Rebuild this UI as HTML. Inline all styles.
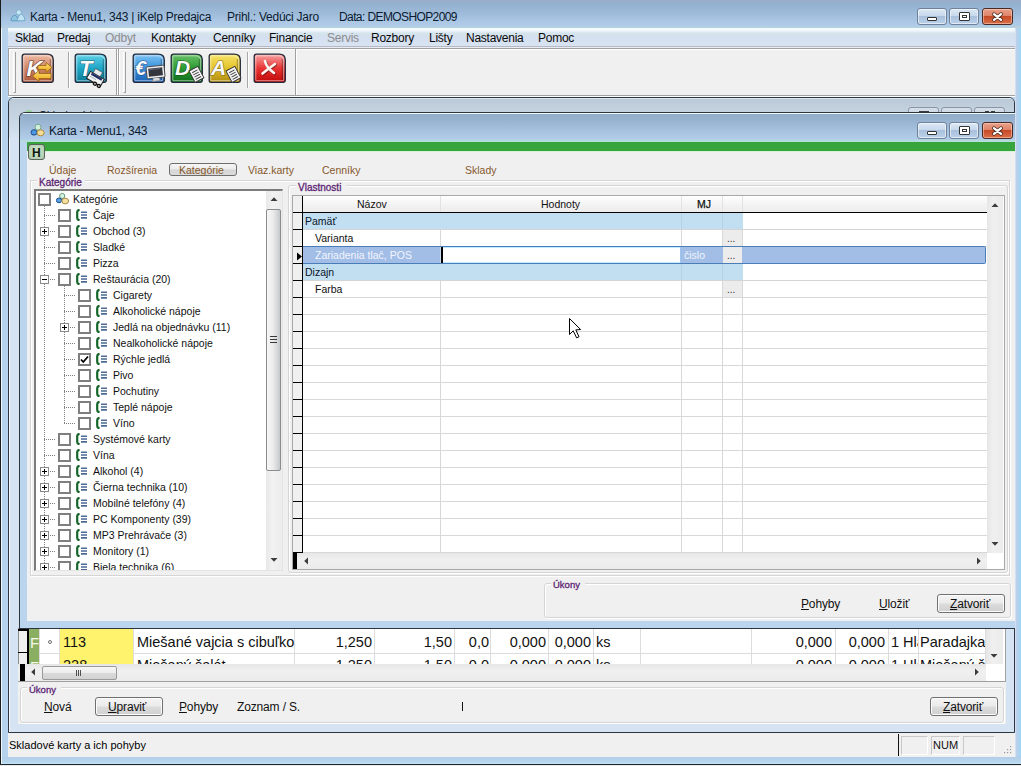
<!DOCTYPE html>
<html><head><meta charset="utf-8">
<style>
*{box-sizing:border-box}
html,body{margin:0;padding:0}
body{width:1021px;height:766px;position:relative;overflow:hidden;background:#b9d2ec;font-family:"Liberation Sans",sans-serif;color:#000}
.a{position:absolute}
.t{position:absolute;white-space:nowrap;line-height:1}
.wb{position:absolute;width:30px;height:17px;border:1px solid #6f819b;border-radius:3px;background:linear-gradient(#dce8f5 0%,#c8d9ec 45%,#a9c0dc 50%,#bcd1ea 100%);box-shadow:inset 0 0 0 1px rgba(255,255,255,.55)}
.wb.c{width:31px;border-color:#4a2a24;background:linear-gradient(#eaa08c 0%,#de8468 45%,#c74a26 50%,#d9704a 100%);box-shadow:inset 0 0 0 1px rgba(255,220,200,.5)}
.menu{position:absolute;top:32px;font-size:12px;letter-spacing:-0.25px;line-height:1;white-space:nowrap;color:#0a0a0a}
.menu.g{color:#8d8d8d}
.tbicon{position:absolute;width:32px;height:29px;border:1.5px solid #2b2f3c;border-radius:4px 8px 4px 4px}
.tbsep{position:absolute;width:1px;background:#a8a8a8;box-shadow:1px 0 0 #fff}
</style></head><body>

<!-- ===== OUTER FRAME ===== -->
<div class="a" style="left:0;top:0;width:1021px;height:28px;background:linear-gradient(#9aaecb 0px,#94b0cf 4px,#9cbad7 12px,#a8c5e3 20px,#b0cce8 26px,#b8d0dc 27px,#b8d0dc 28px)"></div>
<div class="a" style="left:2px;top:28px;width:6px;height:736px;background:#b6d2ec"></div>
<div class="a" style="left:1015px;top:28px;width:6px;height:736px;background:linear-gradient(90deg,#e8f0fa 0px,#bccfe8 1px,#b4d2ee 3px,#9cd6f6 6px)"></div>
<div class="a" style="left:0;top:757px;width:1021px;height:7px;background:linear-gradient(#b2cde8,#b8d6ee 5px,#c4e4f4 7px)"></div>
<div class="a" style="left:0;top:0;width:1px;height:766px;background:#1c1c1c"></div>
<div class="a" style="left:1px;top:28px;width:1px;height:736px;background:#f0f6fc"></div>
<div class="a" style="left:0;top:764px;width:1021px;height:1px;background:#1e2630"></div>
<div class="a" style="left:0;top:765px;width:1021px;height:1px;background:#e8e8e8"></div>

<!-- title icon -->
<svg class="a" style="left:10px;top:9px" width="16" height="13" viewBox="0 0 16 13"><path d="M1.2,11.8 Q0.6,9 3,6.8 Q5,5.6 6.4,7 L8.5,11.8 Z" fill="#8ec4e0" stroke="#5e98c0" stroke-width=".9" stroke-linejoin="round"/><path d="M6.6,11.8 L9.6,5.6 Q11.5,4.6 13,6.2 Q15.4,9 14.8,11.8 Z" fill="#c0e2f2" stroke="#6ea6c8" stroke-width=".9" stroke-linejoin="round"/><circle cx="8.8" cy="3.4" r="2.6" fill="#c8e8f4" stroke="#78acc8" stroke-width=".9"/></svg>
<div class="t" style="left:30px;top:11px;font-size:12px;letter-spacing:-0.25px;color:#0c1a30">Karta - Menu1, 343 | iKelp Predajca</div>
<div class="t" style="left:227px;top:11px;font-size:12px;letter-spacing:-0.25px;color:#0c1a30">Prihl.: Vedúci Jaro</div>
<div class="t" style="left:339px;top:11px;font-size:12px;letter-spacing:-0.6px;color:#0c1a30">Data: DEMOSHOP2009</div>

<div class="wb" style="left:917px;top:8px"><div class="a" style="left:9px;top:8px;width:10px;height:4px;border:1px solid #333;background:#fff;border-radius:1px"></div></div>
<div class="wb" style="left:949px;top:8px"><div class="a" style="left:9px;top:3px;width:11px;height:9px;border:1px solid #333;background:#fff;border-radius:1px"><div class="a" style="left:2px;top:2px;width:5px;height:3px;border:1px solid #333"></div></div></div>
<div class="wb c" style="left:982px;top:8px"><svg class="a" style="left:8px;top:2px" width="13" height="12" viewBox="0 0 13 12"><path d="M3,3.2 L10,8.8 M10,3.2 L3,8.8" stroke="#4a2a20" stroke-width="3.8" stroke-linecap="round"/><path d="M3,3.2 L10,8.8 M10,3.2 L3,8.8" stroke="#fff" stroke-width="2.3" stroke-linecap="round"/></svg></div>

<!-- ===== MENU BAR ===== -->
<div class="a" style="left:8px;top:28px;width:1007px;height:18px;background:linear-gradient(#f4ffff 0px,#eef4fb 3px,#d4e4ec 5px,#d4dff0 10px,#d8e4f2 18px)"></div>
<div class="a" style="left:8px;top:46px;width:1007px;height:1px;background:#b8b8c4"></div>
<div class="a" style="left:8px;top:47px;width:1007px;height:1px;background:#e8ecf4"></div>
<div class="a" style="left:8px;top:48px;width:1007px;height:1px;background:#a0a0a0"></div>
<div class="menu" style="left:15px">Sklad</div>
<div class="menu" style="left:57px">Predaj</div>
<div class="menu g" style="left:105px">Odbyt</div>
<div class="menu" style="left:151px">Kontakty</div>
<div class="menu" style="left:213px">Cenníky</div>
<div class="menu" style="left:269px">Financie</div>
<div class="menu g" style="left:327px">Servis</div>
<div class="menu" style="left:371px">Rozbory</div>
<div class="menu" style="left:429px">Lišty</div>
<div class="menu" style="left:466px">Nastavenia</div>
<div class="menu" style="left:538px">Pomoc</div>

<!-- ===== TOOLBAR ===== -->
<div class="a" style="left:8px;top:49px;width:1007px;height:48px;background:#f0f0f0;border-top:1px solid #fff"></div>
<!--TOOLBAR_ICONS-->
<div class="a" style="left:8px;top:48px;width:109px;height:48px;border:1px solid #a0a0a0;box-shadow:inset 1px 1px 0 #fff,1px 1px 0 #fff"></div>
<div class="a" style="left:118px;top:48px;width:178px;height:48px;border:1px solid #a0a0a0;box-shadow:inset 1px 1px 0 #fff,1px 1px 0 #fff"></div>
<div class="a" style="left:13px;top:52px;width:3px;height:41px;border-left:1px solid #fff;border-right:1px solid #a0a0a0;border-bottom:1px solid #a0a0a0"></div>
<div class="a" style="left:123px;top:52px;width:3px;height:41px;border-left:1px solid #fff;border-right:1px solid #a0a0a0;border-bottom:1px solid #a0a0a0"></div>
<div class="a" style="left:68px;top:52px;width:1px;height:36px;background:#a8a8a8;box-shadow:1px 0 0 #fff"></div>
<div class="a" style="left:247px;top:52px;width:1px;height:36px;background:#a8a8a8;box-shadow:1px 0 0 #fff"></div>
<svg class="a" style="left:21px;top:53px;overflow:visible" width="34" height="34" viewBox="0 0 34 34"><defs><linearGradient id="gk" x1="0" y1="0" x2="0" y2="1"><stop offset="0" stop-color="#f0bca6"/><stop offset=".5" stop-color="#cf8566"/><stop offset="1" stop-color="#a9553a"/></linearGradient></defs>
<path d="M3.5,1.2 H26 Q32.3,1.2 32.3,7 V27.5 Q32.3,29.3 30.5,29.3 H2.8 Q1.2,29.3 1.2,27.5 V3.5 Q1.2,1.2 3.5,1.2 Z" fill="url(#gk)" stroke="#22283a" stroke-width="1.3"/>
<path d="M3.8,2.8 H25.6 Q30.6,2.8 30.6,7.6 V27 Q30.6,27.7 30,27.7 H3.2 Q2.8,27.7 2.8,27 V3.8 Q2.8,2.8 3.8,2.8 Z" fill="none" stroke="#ffffff" stroke-opacity=".5" stroke-width="1"/>
<path d="M29.5,6 V27" stroke="#000" stroke-opacity=".25" stroke-width="1.5"/>
<text x="5.5" y="23" font-family="Liberation Sans" font-weight="bold" font-style="italic" font-size="22" fill="#fbfbfb" stroke="#5a2e1c" stroke-width="1.1" paint-order="stroke">K</text>
<defs><linearGradient id="ar" x1="0" y1="0" x2="0" y2="1"><stop offset="0" stop-color="#ffe070"/><stop offset="1" stop-color="#e8a418"/></linearGradient></defs>
<path d="M17,12.5 H25 V9.5 L31,14.5 L25,19.5 V16.5 H17 Z" fill="url(#ar)" stroke="#9a6210" stroke-width=".8"/>
<path d="M30,20.5 H18 V17.5 L11.5,23 L18,28.5 V25.5 H30 Z" fill="url(#ar)" stroke="#9a6210" stroke-width=".8"/></svg>
<svg class="a" style="left:74px;top:53px;overflow:visible" width="34" height="34" viewBox="0 0 34 34"><defs><linearGradient id="gt" x1="0" y1="0" x2="0" y2="1"><stop offset="0" stop-color="#62d2e8"/><stop offset=".5" stop-color="#1ea6c6"/><stop offset="1" stop-color="#0a7a96"/></linearGradient></defs>
<path d="M3.5,1.2 H26 Q32.3,1.2 32.3,7 V27.5 Q32.3,29.3 30.5,29.3 H2.8 Q1.2,29.3 1.2,27.5 V3.5 Q1.2,1.2 3.5,1.2 Z" fill="url(#gt)" stroke="#22283a" stroke-width="1.3"/>
<path d="M3.8,2.8 H25.6 Q30.6,2.8 30.6,7.6 V27 Q30.6,27.7 30,27.7 H3.2 Q2.8,27.7 2.8,27 V3.8 Q2.8,2.8 3.8,2.8 Z" fill="none" stroke="#ffffff" stroke-opacity=".5" stroke-width="1"/>
<path d="M29.5,6 V27" stroke="#000" stroke-opacity=".25" stroke-width="1.5"/><text x="5" y="23" font-family="Liberation Sans" font-weight="bold" font-style="italic" font-size="22" fill="#fafafa" stroke="#0a4a5a" stroke-opacity=".8" stroke-width="1.1" paint-order="stroke">T</text>
<g transform="translate(19,14) rotate(30)"><rect x="3" y="0" width="8" height="6" fill="#e4eaee" stroke="#444" stroke-width=".6"/>
<path d="M0,5 H16 V13 H0 Z" fill="#f2f2f2" stroke="#222" stroke-width="1"/>
<rect x="2" y="5.5" width="12" height="2.2" fill="#1c2c64"/>
<path d="M2,9.5 H9" stroke="#9ab" stroke-width=".8"/>
<circle cx="10" cy="13.5" r="2.2" fill="#111"/><circle cx="14.5" cy="13.5" r="2.2" fill="#111"/><circle cx="10" cy="13.5" r=".9" fill="#bbb"/><circle cx="14.5" cy="13.5" r=".9" fill="#bbb"/></g></svg>
<svg class="a" style="left:132px;top:53px;overflow:visible" width="34" height="34" viewBox="0 0 34 34"><defs><linearGradient id="ge" x1="0" y1="0" x2="0" y2="1"><stop offset="0" stop-color="#7cc4f4"/><stop offset=".5" stop-color="#3a90dc"/><stop offset="1" stop-color="#1c62b4"/></linearGradient></defs>
<path d="M3.5,1.2 H26 Q32.3,1.2 32.3,7 V27.5 Q32.3,29.3 30.5,29.3 H2.8 Q1.2,29.3 1.2,27.5 V3.5 Q1.2,1.2 3.5,1.2 Z" fill="url(#ge)" stroke="#22283a" stroke-width="1.3"/>
<path d="M3.8,2.8 H25.6 Q30.6,2.8 30.6,7.6 V27 Q30.6,27.7 30,27.7 H3.2 Q2.8,27.7 2.8,27 V3.8 Q2.8,2.8 3.8,2.8 Z" fill="none" stroke="#ffffff" stroke-opacity=".5" stroke-width="1"/>
<path d="M29.5,6 V27" stroke="#000" stroke-opacity=".25" stroke-width="1.5"/><text x="3" y="22" font-family="Liberation Sans" font-weight="bold" font-style="italic" font-size="20" fill="#fafafa" stroke="#0c3c7c" stroke-opacity=".8" stroke-width="1.1" paint-order="stroke">€</text>
<g transform="translate(14,14) rotate(-6)"><rect x="0" y="0" width="18" height="12" rx="1.2" fill="#eceef0" stroke="#444" stroke-width=".9"/>
<rect x="2" y="2" width="14" height="8" fill="#34363e"/><path d="M3,3 L14,3" stroke="#667" stroke-width="1"/><path d="M6,12 L5,15 H13 L12,12" fill="#d8dadc" stroke="#777" stroke-width=".6"/></g></svg>
<svg class="a" style="left:170px;top:53px;overflow:visible" width="34" height="34" viewBox="0 0 34 34"><defs><linearGradient id="gd" x1="0" y1="0" x2="0" y2="1"><stop offset="0" stop-color="#6cc26a"/><stop offset=".5" stop-color="#2b9a32"/><stop offset="1" stop-color="#0f6e1c"/></linearGradient></defs>
<path d="M3.5,1.2 H26 Q32.3,1.2 32.3,7 V27.5 Q32.3,29.3 30.5,29.3 H2.8 Q1.2,29.3 1.2,27.5 V3.5 Q1.2,1.2 3.5,1.2 Z" fill="url(#gd)" stroke="#22283a" stroke-width="1.3"/>
<path d="M3.8,2.8 H25.6 Q30.6,2.8 30.6,7.6 V27 Q30.6,27.7 30,27.7 H3.2 Q2.8,27.7 2.8,27 V3.8 Q2.8,2.8 3.8,2.8 Z" fill="none" stroke="#ffffff" stroke-opacity=".5" stroke-width="1"/>
<path d="M29.5,6 V27" stroke="#000" stroke-opacity=".25" stroke-width="1.5"/><text x="5" y="22" font-family="Liberation Sans" font-weight="bold" font-style="italic" font-size="21" fill="#fafafa" stroke="#0a3a10" stroke-opacity=".8" stroke-width="1.1" paint-order="stroke">D</text><g transform="translate(19,18) rotate(-28)"><rect x="0" y="0" width="10" height="13" fill="#f4f4f4" stroke="#333" stroke-width=".9"/>
<path d="M2,3 H8 M2,5.5 H8 M2,8 H8 M2,10.5 H8" stroke="#444" stroke-width="1"/></g></svg>
<svg class="a" style="left:208px;top:53px;overflow:visible" width="34" height="34" viewBox="0 0 34 34"><defs><linearGradient id="ga" x1="0" y1="0" x2="0" y2="1"><stop offset="0" stop-color="#f8e46a"/><stop offset=".5" stop-color="#e2c22a"/><stop offset="1" stop-color="#b08a10"/></linearGradient></defs>
<path d="M3.5,1.2 H26 Q32.3,1.2 32.3,7 V27.5 Q32.3,29.3 30.5,29.3 H2.8 Q1.2,29.3 1.2,27.5 V3.5 Q1.2,1.2 3.5,1.2 Z" fill="url(#ga)" stroke="#22283a" stroke-width="1.3"/>
<path d="M3.8,2.8 H25.6 Q30.6,2.8 30.6,7.6 V27 Q30.6,27.7 30,27.7 H3.2 Q2.8,27.7 2.8,27 V3.8 Q2.8,2.8 3.8,2.8 Z" fill="none" stroke="#ffffff" stroke-opacity=".5" stroke-width="1"/>
<path d="M29.5,6 V27" stroke="#000" stroke-opacity=".25" stroke-width="1.5"/><text x="3" y="22" font-family="Liberation Sans" font-weight="bold" font-style="italic" font-size="21" fill="#fafafa" stroke="#6a5008" stroke-opacity=".8" stroke-width="1.1" paint-order="stroke">A</text><g transform="translate(18,18) rotate(-28)"><rect x="0" y="0" width="10" height="13" fill="#f4f4f4" stroke="#333" stroke-width=".9"/>
<path d="M2,3 H8 M2,5.5 H8 M2,8 H8 M2,10.5 H8" stroke="#444" stroke-width="1"/></g></svg>
<svg class="a" style="left:253px;top:53px;overflow:visible" width="34" height="34" viewBox="0 0 34 34"><defs><linearGradient id="gx" x1="0" y1="0" x2="0" y2="1"><stop offset="0" stop-color="#f8a4a4"/><stop offset=".5" stop-color="#e83434"/><stop offset="1" stop-color="#c00808"/></linearGradient></defs>
<path d="M3.5,1.2 H26 Q32.3,1.2 32.3,7 V27.5 Q32.3,29.3 30.5,29.3 H2.8 Q1.2,29.3 1.2,27.5 V3.5 Q1.2,1.2 3.5,1.2 Z" fill="url(#gx)" stroke="#22283a" stroke-width="1.3"/>
<path d="M3.8,2.8 H25.6 Q30.6,2.8 30.6,7.6 V27 Q30.6,27.7 30,27.7 H3.2 Q2.8,27.7 2.8,27 V3.8 Q2.8,2.8 3.8,2.8 Z" fill="none" stroke="#ffffff" stroke-opacity=".5" stroke-width="1"/>
<path d="M29.5,6 V27" stroke="#000" stroke-opacity=".25" stroke-width="1.5"/>
<path d="M12,8 Q13,14 21,20 M22,11 Q15,16 9.5,20.5" stroke="#000" stroke-opacity=".35" stroke-width="2.8" stroke-linecap="round" fill="none" transform="translate(.8,.8)"/>
<path d="M12,8 Q13,14 21,20 M22,11 Q15,16 9.5,20.5" stroke="#fbf4f0" stroke-width="2.6" stroke-linecap="round" fill="none"/></svg>

<!-- ===== CHILD 1 (Skladove karty) ===== -->
<div class="a" style="left:8px;top:95px;width:1007px;height:1px;background:#a0a0a0"></div>
<div class="a" style="left:8px;top:96px;width:1007px;height:1px;background:#fff"></div>
<div class="a" style="left:8px;top:97px;width:1007px;height:636px;background:#d6e3f2;border:1px solid #2e3640;box-shadow:inset 1px 0 0 #f4f8fc;border-radius:6px 6px 0 0;overflow:hidden"><div class="a" style="left:0;top:0;width:1005px;height:40px;background:linear-gradient(#dce6f0 0px,#dce6f0 1px,#bccad8 1px,#c2d0de 10px,#cad8e6 25px,#d6e3f2 40px)"></div></div>
<div class="a" style="left:18px;top:628px;width:988px;height:96px;background:#f0f0f0"></div>
<!--CHILD1_CONTENT-->
<div class="a" style="left:18px;top:628px;width:988px;height:54px;background:#fff;border-right:1px solid #a0a0a0;border-bottom:1px solid #a0a0a0;overflow:hidden">
<div class="a" style="left:0px;top:0px;width:10px;height:40px;background:#f0f0f0"></div>
<div class="a" style="left:0px;top:0px;width:1px;height:40px;background:#8c8c8c"></div>
<div class="a" style="left:9px;top:0px;width:2px;height:40px;background:#000"></div>
<div class="a" style="left:0px;top:1px;width:11px;height:2px;background:#000"></div>
<div class="a" style="left:0px;top:24px;width:11px;height:1px;background:#000"></div>
<div class="a" style="left:11px;top:1px;width:11px;height:24px;background:#8aae62"></div>
<div class="t" style="left:12px;top:7px;font-size:15px;color:#f4f8e8">F</div>
<div class="a" style="left:42px;top:1px;width:74px;height:24px;background:#fff36e"></div>
<div class="a" style="left:30px;top:12px;width:4px;height:4px;border:1px solid #707070;border-radius:50%"></div>
<div class="a" style="left:11px;top:25px;width:957px;height:1px;background:#dcdcdc"></div>
<div class="a" style="left:21px;top:1px;width:1px;height:24px;background:#dcdcdc"></div>
<div class="a" style="left:41px;top:1px;width:1px;height:24px;background:#dcdcdc"></div>
<div class="a" style="left:115px;top:1px;width:1px;height:24px;background:#dcdcdc"></div>
<div class="a" style="left:276px;top:1px;width:1px;height:24px;background:#dcdcdc"></div>
<div class="a" style="left:356px;top:1px;width:1px;height:24px;background:#dcdcdc"></div>
<div class="a" style="left:436px;top:1px;width:1px;height:24px;background:#dcdcdc"></div>
<div class="a" style="left:472px;top:1px;width:1px;height:24px;background:#dcdcdc"></div>
<div class="a" style="left:530px;top:1px;width:1px;height:24px;background:#dcdcdc"></div>
<div class="a" style="left:575px;top:1px;width:1px;height:24px;background:#dcdcdc"></div>
<div class="a" style="left:622px;top:1px;width:1px;height:24px;background:#dcdcdc"></div>
<div class="a" style="left:733px;top:1px;width:1px;height:24px;background:#dcdcdc"></div>
<div class="a" style="left:817px;top:1px;width:1px;height:24px;background:#dcdcdc"></div>
<div class="a" style="left:870px;top:1px;width:1px;height:24px;background:#dcdcdc"></div>
<div class="a" style="left:900px;top:1px;width:1px;height:24px;background:#dcdcdc"></div>
<div class="a" style="left:967px;top:1px;width:1px;height:24px;background:#dcdcdc"></div>
<div class="t" style="left:45px;top:7px;font-size:14.5px;color:#111">113</div>
<div class="t" style="left:119px;top:7px;font-size:14.5px;color:#111">Miešané vajcia s cibuľko</div>
<div class="t" style="right:633px;top:7px;font-size:14.5px;color:#111">1,250</div>
<div class="t" style="right:553px;top:7px;font-size:14.5px;color:#111">1,50</div>
<div class="t" style="right:516px;top:7px;font-size:14.5px;color:#111">0,0</div>
<div class="t" style="right:459px;top:7px;font-size:14.5px;color:#111">0,000</div>
<div class="t" style="right:414px;top:7px;font-size:14.5px;color:#111">0,000</div>
<div class="t" style="left:578px;top:7px;font-size:14.5px;color:#111">ks</div>
<div class="t" style="right:173px;top:7px;font-size:14.5px;color:#111">0,000</div>
<div class="t" style="right:120px;top:7px;font-size:14.5px;color:#111">0,000</div>
<div class="t" style="left:873px;top:7px;width:27px;overflow:hidden;font-size:14.5px;color:#111">1 Hla</div>
<div class="t" style="left:902px;top:7px;width:65px;overflow:hidden;font-size:14.5px;color:#111">Paradajka</div>
<div class="a" style="left:11px;top:25px;width:11px;height:24px;background:#8aae62"></div>
<div class="t" style="left:12px;top:31px;font-size:15px;color:#f4f8e8">F</div>
<div class="a" style="left:42px;top:25px;width:74px;height:24px;background:#fff36e"></div>
<div class="a" style="left:30px;top:36px;width:4px;height:4px;border:1px solid #707070;border-radius:50%"></div>
<div class="a" style="left:11px;top:49px;width:957px;height:1px;background:#dcdcdc"></div>
<div class="a" style="left:21px;top:25px;width:1px;height:24px;background:#dcdcdc"></div>
<div class="a" style="left:41px;top:25px;width:1px;height:24px;background:#dcdcdc"></div>
<div class="a" style="left:115px;top:25px;width:1px;height:24px;background:#dcdcdc"></div>
<div class="a" style="left:276px;top:25px;width:1px;height:24px;background:#dcdcdc"></div>
<div class="a" style="left:356px;top:25px;width:1px;height:24px;background:#dcdcdc"></div>
<div class="a" style="left:436px;top:25px;width:1px;height:24px;background:#dcdcdc"></div>
<div class="a" style="left:472px;top:25px;width:1px;height:24px;background:#dcdcdc"></div>
<div class="a" style="left:530px;top:25px;width:1px;height:24px;background:#dcdcdc"></div>
<div class="a" style="left:575px;top:25px;width:1px;height:24px;background:#dcdcdc"></div>
<div class="a" style="left:622px;top:25px;width:1px;height:24px;background:#dcdcdc"></div>
<div class="a" style="left:733px;top:25px;width:1px;height:24px;background:#dcdcdc"></div>
<div class="a" style="left:817px;top:25px;width:1px;height:24px;background:#dcdcdc"></div>
<div class="a" style="left:870px;top:25px;width:1px;height:24px;background:#dcdcdc"></div>
<div class="a" style="left:900px;top:25px;width:1px;height:24px;background:#dcdcdc"></div>
<div class="a" style="left:967px;top:25px;width:1px;height:24px;background:#dcdcdc"></div>
<div class="t" style="left:45px;top:30px;font-size:14.5px;color:#111">228</div>
<div class="t" style="left:119px;top:30px;font-size:14.5px;color:#111">Miešaný šalát</div>
<div class="t" style="right:633px;top:30px;font-size:14.5px;color:#111">1,250</div>
<div class="t" style="right:553px;top:30px;font-size:14.5px;color:#111">1,50</div>
<div class="t" style="right:516px;top:30px;font-size:14.5px;color:#111">0,0</div>
<div class="t" style="right:459px;top:30px;font-size:14.5px;color:#111">0,000</div>
<div class="t" style="right:414px;top:30px;font-size:14.5px;color:#111">0,000</div>
<div class="t" style="left:578px;top:30px;font-size:14.5px;color:#111">ks</div>
<div class="t" style="right:173px;top:30px;font-size:14.5px;color:#111">0,000</div>
<div class="t" style="right:120px;top:30px;font-size:14.5px;color:#111">0,000</div>
<div class="t" style="left:873px;top:30px;width:27px;overflow:hidden;font-size:14.5px;color:#111">1 Hla</div>
<div class="t" style="left:902px;top:30px;width:65px;overflow:hidden;font-size:14.5px;color:#111">Miešaný šalát</div>
<div class="a" style="left:968px;top:0px;width:17px;height:36px;background:linear-gradient(90deg,#e6e6e6,#f0f0f0 40%,#ebebeb)"></div>
<svg class="a" style="left:972px;top:25px" width="8" height="6" viewBox="0 0 8 6"><path d="M0.5,1 L4,4.8 L7.5,1 Z" fill="#3c3c3c"/></svg>
<div class="a" style="left:968px;top:36px;width:17px;height:17px;background:#fff"></div>
<div class="a" style="left:0px;top:36px;width:968px;height:17px;background:linear-gradient(#e6e6e6,#f0f0f0 40%,#ebebeb)"></div>
<div class="a" style="left:2px;top:36px;width:5px;height:17px;background:#000"></div>
<svg class="a" style="left:12px;top:40px" width="6" height="8" viewBox="0 0 6 8"><path d="M5,0.5 L1.2,4 L5,7.5 Z" fill="#3c3c3c"/></svg>
<svg class="a" style="left:956px;top:40px" width="6" height="8" viewBox="0 0 6 8"><path d="M1,0.5 L4.8,4 L1,7.5 Z" fill="#3c3c3c"/></svg>
<div class="a" style="left:24px;top:38px;width:75px;height:14px;border:1px solid #9a9a9a;border-radius:2px;background:linear-gradient(#f6f6f6,#ececec 50%,#dadada 51%,#d2d2d2)"></div>
<div class="a" style="left:58px;top:42px;width:5px;height:6px;background:repeating-linear-gradient(90deg,#505050 0 1px,transparent 1px 2px)"></div>
</div>
<div class="a" style="left:20px;top:687px;width:984px;height:36px;border:1px solid #d5d5d5;border-radius:3px;box-shadow:inset 1px 1px 0 #fff,1px 1px 0 #fff"></div>
<div class="a" style="left:27px;top:683px;width:34px;height:8px;background:#f0f0f0"></div>
<div class="t" style="left:29px;top:685px;font-size:9.5px;-webkit-text-stroke:.3px #5c2474;color:#5c2474">Úkony</div>
<div class="t" style="left:44px;top:701px;font-size:12px;letter-spacing:-0.15px;color:#111"><u>N</u>ová</div>
<div class="a" style="left:95px;top:697px;width:68px;height:19px;border:1px solid #707070;border-radius:3px;background:linear-gradient(#f4f4f4 0%,#ebebeb 48%,#dcdcdc 52%,#cfcfcf 100%);box-shadow:inset 0 0 0 1px #fcfcfc"></div>
<div class="t" style="left:108px;top:701px;font-size:12px;letter-spacing:-0.15px;color:#111"><u>U</u>praviť</div>
<div class="t" style="left:179px;top:701px;font-size:12px;letter-spacing:-0.15px;color:#111"><u>P</u>ohyby</div>
<div class="t" style="left:237px;top:701px;font-size:12px;letter-spacing:-0.15px;color:#111">Zoznam / S.</div>
<div class="a" style="left:462px;top:702px;width:1px;height:9px;background:#111"></div>
<div class="a" style="left:930px;top:697px;width:68px;height:19px;border:1px solid #707070;border-radius:3px;background:linear-gradient(#f4f4f4 0%,#ebebeb 48%,#dcdcdc 52%,#cfcfcf 100%);box-shadow:inset 0 0 0 1px #fcfcfc"></div>
<div class="t" style="left:943px;top:701px;font-size:12px;letter-spacing:-0.15px;color:#111"><u>Z</u>atvoriť</div>

<!-- ===== STATUS BAR ===== -->
<div class="a" style="left:8px;top:733px;width:1007px;height:24px;background:#f0f0f0"></div>
<div class="t" style="left:9px;top:740px;font-size:11px">Skladové karty a ich pohyby</div>
<!--STATUS_PANELS-->
<div class="a" style="left:898px;top:734px;width:1px;height:22px;background:#111"></div>
<div class="a" style="left:901px;top:736px;width:27px;height:19px;border:1px solid #c8c8c8;border-right-color:#fff;border-bottom-color:#fff"></div>
<div class="a" style="left:931px;top:736px;width:29px;height:19px;border:1px solid #c8c8c8;border-right-color:#fff;border-bottom-color:#fff"></div>
<div class="a" style="left:963px;top:736px;width:32px;height:19px;border:1px solid #c8c8c8;border-right-color:#fff;border-bottom-color:#fff"></div>
<div class="t" style="left:933px;top:740px;font-size:11px;color:#111">NUM</div>
<svg class="a" style="left:1003px;top:745px" width="10" height="10" viewBox="0 0 10 10"><g fill="#9a9a9a"><rect x="7" y="1" width="1.2" height="1.2"/><rect x="4" y="4" width="1.2" height="1.2"/><rect x="7" y="4" width="1.2" height="1.2"/><rect x="1" y="7" width="1.2" height="1.2"/><rect x="4" y="7" width="1.2" height="1.2"/><rect x="7" y="7" width="1.2" height="1.2"/></g></svg>

<!-- ===== CHILD 2 (Karta) ===== -->
<div class="a" style="left:19px;top:112px;width:996px;height:517px;background:#bcd5ee;border:1px solid #2e3640;border-right:none;border-radius:6px 0 0 0;overflow:hidden"><div class="a" style="left:0;top:0;width:996px;height:29px;background:linear-gradient(#eefafe 0px,#eefafe 1px,#92acc8 1px,#98b4d0 8px,#a6c2de 18px,#b2cde9 26px,#b4dcdc 28px,#b8e0d8 29px)"></div></div>
<div class="a" style="left:8px;top:97px;width:1007px;height:15px;overflow:hidden">
<div class="t" style="left:31px;top:13px;font-size:12px;letter-spacing:-0.25px;color:#1a2430">Skladové karty</div><div class="a" style="left:17px;top:13px;width:8px;height:6px;border-radius:50%;background:#9ad09a"></div>
<div class="a" style="left:900px;top:10px;width:31px;height:17px;border:1px solid #8a96a6;border-radius:3px;background:linear-gradient(#d4dee8,#c4d0dc)"><div class="a" style="left:10px;top:3px;width:10px;height:3px;background:#3a3a3a"></div></div>
<div class="a" style="left:933px;top:10px;width:31px;height:17px;border:1px solid #8a96a6;border-radius:3px;background:linear-gradient(#d4dee8,#c4d0dc)"></div>
<div class="a" style="left:966px;top:10px;width:31px;height:17px;border:1px solid #8a96a6;border-radius:3px;background:linear-gradient(#d4dee8,#c4d0dc)"><div class="a" style="left:10px;top:3px;width:4px;height:3px;background:#3a3a3a"></div><div class="a" style="left:16px;top:3px;width:4px;height:3px;background:#3a3a3a"></div></div>
</div>
<div class="wb" style="left:917px;top:122px"><div class="a" style="left:9px;top:8px;width:10px;height:4px;border:1px solid #333;background:#fff;border-radius:1px"></div></div>
<div class="wb" style="left:949px;top:122px"><div class="a" style="left:9px;top:3px;width:11px;height:9px;border:1px solid #333;background:#fff;border-radius:1px"><div class="a" style="left:2px;top:2px;width:5px;height:3px;border:1px solid #333"></div></div></div>
<div class="wb c" style="left:982px;top:122px"><svg class="a" style="left:8px;top:2px" width="13" height="12" viewBox="0 0 13 12"><path d="M3,3.2 L10,8.8 M10,3.2 L3,8.8" stroke="#4a2a20" stroke-width="3.8" stroke-linecap="round"/><path d="M3,3.2 L10,8.8 M10,3.2 L3,8.8" stroke="#fff" stroke-width="2.3" stroke-linecap="round"/></svg></div>
<svg class="a" style="left:30px;top:123px" width="15" height="14" viewBox="0 0 15 14"><circle cx="8" cy="4.2" r="3" fill="#d0f0dc" stroke="#78a890" stroke-width="1"/><ellipse cx="4" cy="9.4" rx="3" ry="2.7" fill="#4c98e0" stroke="#1c4c8c" stroke-width="1"/><ellipse cx="10.6" cy="9.8" rx="3.6" ry="3" fill="#f4dc98" stroke="#b08c40" stroke-width="1"/></svg>
<div class="t" style="left:49px;top:125px;font-size:12px;letter-spacing:-0.25px;color:#0c1a30">Karta - Menu1, 343</div>
<div class="a" style="left:27px;top:142px;width:988px;height:479px;background:#f0f0f0"></div>
<div class="a" style="left:27px;top:142px;width:988px;height:9px;background:#37a43c"></div>
<!--CHILD2_CONTENT-->
<div class="a" style="left:28px;top:144px;width:17px;height:16px;border:1.5px solid #56625a;border-radius:3px;background:radial-gradient(ellipse at 50% 45%,#d2e6d0 0%,#b6d2b2 70%,#a2c09e 100%)"></div>
<div class="t" style="left:32px;top:147px;font-size:12px;font-weight:bold;color:#101810">H</div>
<div class="a" style="left:45px;top:151px;width:970px;height:1px;background:#d8f4d4"></div>
<div class="t" style="left:49px;top:165px;font-size:10.5px;color:#86582c">Údaje</div>
<div class="t" style="left:107px;top:165px;font-size:10.5px;color:#86582c">Rozšírenia</div>
<div class="t" style="left:248px;top:165px;font-size:10.5px;color:#86582c">Viaz.karty</div>
<div class="t" style="left:322px;top:165px;font-size:10.5px;color:#86582c">Cenníky</div>
<div class="t" style="left:465px;top:165px;font-size:10.5px;color:#86582c">Sklady</div>
<div class="a" style="left:169px;top:163px;width:68px;height:13px;border:1px solid #6e6e6e;border-radius:3px;background:linear-gradient(#f6f6f6 0%,#ececec 45%,#d6d6d6 55%,#dcdcdc 100%)"></div>
<div class="t" style="left:179px;top:165px;font-size:10.5px;color:#86582c">Kategórie</div>
<div class="a" style="left:30px;top:180px;width:980px;height:396px;border:1px solid #d5d5d5;box-shadow:inset 1px 1px 0 #fff,1px 1px 0 #fff"></div>
<div class="a" style="left:37px;top:177px;width:48px;height:9px;background:#f0f0f0"></div>
<div class="t" style="left:39px;top:178px;font-size:10px;-webkit-text-stroke:.3px #5c2474;color:#5c2474">Kategórie</div>
<div class="a" style="left:34px;top:189px;width:249px;height:382px;background:#fff;border-top:2px solid #7c7c7c;border-left:2px solid #7c7c7c;border-right:1px solid #e4e4e4;border-bottom:1px solid #e4e4e4;overflow:hidden">
<div class="a" style="left:8px;top:15px;width:1px;height:369px;background:repeating-linear-gradient(#808080 0 1px,transparent 1px 2px)"></div>
<div class="a" style="left:28px;top:95px;width:1px;height:137px;background:repeating-linear-gradient(#808080 0 1px,transparent 1px 2px)"></div>
<div class="a" style="left:2px;top:2px;width:13px;height:13px;border:2px solid #7f7f7f;background:#fff"></div>
<svg class="a" style="left:20px;top:1px" width="14" height="13" viewBox="0 0 14 13"><circle cx="6.2" cy="4" r="2.6" fill="#d4f4e4" stroke="#6a9a7a" stroke-width="1"/><ellipse cx="3" cy="8.4" rx="2.6" ry="2.4" fill="#5aa0e4" stroke="#1c4c8c" stroke-width="1"/><ellipse cx="9.2" cy="9" rx="3.4" ry="2.8" fill="#f4e0a0" stroke="#a88840" stroke-width="1"/></svg>
<div class="t" style="left:37px;top:3px;font-size:10.5px;color:#111">Kategórie</div>
<div class="a" style="left:8px;top:24px;width:11px;height:1px;background:repeating-linear-gradient(90deg,#808080 0 1px,transparent 1px 2px)"></div>
<div class="a" style="left:22px;top:18px;width:13px;height:13px;border:2px solid #7f7f7f;background:#fff"></div>
<svg class="a" style="left:40px;top:18px" width="12" height="12" viewBox="0 0 12 12"><path d="M3.6,0.8 Q1.2,1 1.2,3.2 V8.8 Q1.2,11 3.6,11.2" stroke="#16662a" stroke-width="2.2" fill="none"/><path d="M5,3.2 H11 M5,6 H11 M5,8.9 H11" stroke="#4c6a94" stroke-width="1.6"/></svg>
<div class="t" style="left:57px;top:19px;font-size:10.5px;color:#111">Čaje</div>
<div class="a" style="left:8px;top:40px;width:11px;height:1px;background:repeating-linear-gradient(90deg,#808080 0 1px,transparent 1px 2px)"></div>
<div class="a" style="left:4px;top:36px;width:9px;height:9px;border:1px solid #8a8a8a;background:#fff"></div>
<div class="a" style="left:6px;top:40px;width:5px;height:1px;background:#000"></div>
<div class="a" style="left:8px;top:38px;width:1px;height:5px;background:#000"></div>
<div class="a" style="left:22px;top:34px;width:13px;height:13px;border:2px solid #7f7f7f;background:#fff"></div>
<svg class="a" style="left:40px;top:34px" width="12" height="12" viewBox="0 0 12 12"><path d="M3.6,0.8 Q1.2,1 1.2,3.2 V8.8 Q1.2,11 3.6,11.2" stroke="#16662a" stroke-width="2.2" fill="none"/><path d="M5,3.2 H11 M5,6 H11 M5,8.9 H11" stroke="#4c6a94" stroke-width="1.6"/></svg>
<div class="t" style="left:57px;top:35px;font-size:10.5px;color:#111">Obchod (3)</div>
<div class="a" style="left:8px;top:56px;width:11px;height:1px;background:repeating-linear-gradient(90deg,#808080 0 1px,transparent 1px 2px)"></div>
<div class="a" style="left:22px;top:50px;width:13px;height:13px;border:2px solid #7f7f7f;background:#fff"></div>
<svg class="a" style="left:40px;top:50px" width="12" height="12" viewBox="0 0 12 12"><path d="M3.6,0.8 Q1.2,1 1.2,3.2 V8.8 Q1.2,11 3.6,11.2" stroke="#16662a" stroke-width="2.2" fill="none"/><path d="M5,3.2 H11 M5,6 H11 M5,8.9 H11" stroke="#4c6a94" stroke-width="1.6"/></svg>
<div class="t" style="left:57px;top:51px;font-size:10.5px;color:#111">Sladké</div>
<div class="a" style="left:8px;top:72px;width:11px;height:1px;background:repeating-linear-gradient(90deg,#808080 0 1px,transparent 1px 2px)"></div>
<div class="a" style="left:22px;top:66px;width:13px;height:13px;border:2px solid #7f7f7f;background:#fff"></div>
<svg class="a" style="left:40px;top:66px" width="12" height="12" viewBox="0 0 12 12"><path d="M3.6,0.8 Q1.2,1 1.2,3.2 V8.8 Q1.2,11 3.6,11.2" stroke="#16662a" stroke-width="2.2" fill="none"/><path d="M5,3.2 H11 M5,6 H11 M5,8.9 H11" stroke="#4c6a94" stroke-width="1.6"/></svg>
<div class="t" style="left:57px;top:67px;font-size:10.5px;color:#111">Pizza</div>
<div class="a" style="left:8px;top:88px;width:11px;height:1px;background:repeating-linear-gradient(90deg,#808080 0 1px,transparent 1px 2px)"></div>
<div class="a" style="left:4px;top:84px;width:9px;height:9px;border:1px solid #8a8a8a;background:#fff"></div>
<div class="a" style="left:6px;top:88px;width:5px;height:1px;background:#000"></div>
<div class="a" style="left:22px;top:82px;width:13px;height:13px;border:2px solid #7f7f7f;background:#fff"></div>
<svg class="a" style="left:40px;top:82px" width="12" height="12" viewBox="0 0 12 12"><path d="M3.6,0.8 Q1.2,1 1.2,3.2 V8.8 Q1.2,11 3.6,11.2" stroke="#16662a" stroke-width="2.2" fill="none"/><path d="M5,3.2 H11 M5,6 H11 M5,8.9 H11" stroke="#4c6a94" stroke-width="1.6"/></svg>
<div class="t" style="left:57px;top:83px;font-size:10.5px;color:#111">Reštaurácia (20)</div>
<div class="a" style="left:28px;top:104px;width:11px;height:1px;background:repeating-linear-gradient(90deg,#808080 0 1px,transparent 1px 2px)"></div>
<div class="a" style="left:42px;top:98px;width:13px;height:13px;border:2px solid #7f7f7f;background:#fff"></div>
<svg class="a" style="left:60px;top:98px" width="12" height="12" viewBox="0 0 12 12"><path d="M3.6,0.8 Q1.2,1 1.2,3.2 V8.8 Q1.2,11 3.6,11.2" stroke="#16662a" stroke-width="2.2" fill="none"/><path d="M5,3.2 H11 M5,6 H11 M5,8.9 H11" stroke="#4c6a94" stroke-width="1.6"/></svg>
<div class="t" style="left:77px;top:99px;font-size:10.5px;color:#111">Cigarety</div>
<div class="a" style="left:28px;top:120px;width:11px;height:1px;background:repeating-linear-gradient(90deg,#808080 0 1px,transparent 1px 2px)"></div>
<div class="a" style="left:42px;top:114px;width:13px;height:13px;border:2px solid #7f7f7f;background:#fff"></div>
<svg class="a" style="left:60px;top:114px" width="12" height="12" viewBox="0 0 12 12"><path d="M3.6,0.8 Q1.2,1 1.2,3.2 V8.8 Q1.2,11 3.6,11.2" stroke="#16662a" stroke-width="2.2" fill="none"/><path d="M5,3.2 H11 M5,6 H11 M5,8.9 H11" stroke="#4c6a94" stroke-width="1.6"/></svg>
<div class="t" style="left:77px;top:115px;font-size:10.5px;color:#111">Alkoholické nápoje</div>
<div class="a" style="left:28px;top:136px;width:11px;height:1px;background:repeating-linear-gradient(90deg,#808080 0 1px,transparent 1px 2px)"></div>
<div class="a" style="left:24px;top:132px;width:9px;height:9px;border:1px solid #8a8a8a;background:#fff"></div>
<div class="a" style="left:26px;top:136px;width:5px;height:1px;background:#000"></div>
<div class="a" style="left:28px;top:134px;width:1px;height:5px;background:#000"></div>
<div class="a" style="left:42px;top:130px;width:13px;height:13px;border:2px solid #7f7f7f;background:#fff"></div>
<svg class="a" style="left:60px;top:130px" width="12" height="12" viewBox="0 0 12 12"><path d="M3.6,0.8 Q1.2,1 1.2,3.2 V8.8 Q1.2,11 3.6,11.2" stroke="#16662a" stroke-width="2.2" fill="none"/><path d="M5,3.2 H11 M5,6 H11 M5,8.9 H11" stroke="#4c6a94" stroke-width="1.6"/></svg>
<div class="t" style="left:77px;top:131px;font-size:10.5px;color:#111">Jedlá na objednávku (11)</div>
<div class="a" style="left:28px;top:152px;width:11px;height:1px;background:repeating-linear-gradient(90deg,#808080 0 1px,transparent 1px 2px)"></div>
<div class="a" style="left:42px;top:146px;width:13px;height:13px;border:2px solid #7f7f7f;background:#fff"></div>
<svg class="a" style="left:60px;top:146px" width="12" height="12" viewBox="0 0 12 12"><path d="M3.6,0.8 Q1.2,1 1.2,3.2 V8.8 Q1.2,11 3.6,11.2" stroke="#16662a" stroke-width="2.2" fill="none"/><path d="M5,3.2 H11 M5,6 H11 M5,8.9 H11" stroke="#4c6a94" stroke-width="1.6"/></svg>
<div class="t" style="left:77px;top:147px;font-size:10.5px;color:#111">Nealkoholické nápoje</div>
<div class="a" style="left:28px;top:168px;width:11px;height:1px;background:repeating-linear-gradient(90deg,#808080 0 1px,transparent 1px 2px)"></div>
<div class="a" style="left:42px;top:162px;width:13px;height:13px;border:2px solid #7f7f7f;background:#fff"></div>
<svg class="a" style="left:42px;top:162px" width="13" height="13" viewBox="0 0 13 13"><path d="M3,6.5 L5.3,9 L10,3.5" stroke="#000" stroke-width="1.8" fill="none"/></svg>
<svg class="a" style="left:60px;top:162px" width="12" height="12" viewBox="0 0 12 12"><path d="M3.6,0.8 Q1.2,1 1.2,3.2 V8.8 Q1.2,11 3.6,11.2" stroke="#16662a" stroke-width="2.2" fill="none"/><path d="M5,3.2 H11 M5,6 H11 M5,8.9 H11" stroke="#4c6a94" stroke-width="1.6"/></svg>
<div class="t" style="left:77px;top:163px;font-size:10.5px;color:#111">Rýchle jedlá</div>
<div class="a" style="left:28px;top:184px;width:11px;height:1px;background:repeating-linear-gradient(90deg,#808080 0 1px,transparent 1px 2px)"></div>
<div class="a" style="left:42px;top:178px;width:13px;height:13px;border:2px solid #7f7f7f;background:#fff"></div>
<svg class="a" style="left:60px;top:178px" width="12" height="12" viewBox="0 0 12 12"><path d="M3.6,0.8 Q1.2,1 1.2,3.2 V8.8 Q1.2,11 3.6,11.2" stroke="#16662a" stroke-width="2.2" fill="none"/><path d="M5,3.2 H11 M5,6 H11 M5,8.9 H11" stroke="#4c6a94" stroke-width="1.6"/></svg>
<div class="t" style="left:77px;top:179px;font-size:10.5px;color:#111">Pivo</div>
<div class="a" style="left:28px;top:200px;width:11px;height:1px;background:repeating-linear-gradient(90deg,#808080 0 1px,transparent 1px 2px)"></div>
<div class="a" style="left:42px;top:194px;width:13px;height:13px;border:2px solid #7f7f7f;background:#fff"></div>
<svg class="a" style="left:60px;top:194px" width="12" height="12" viewBox="0 0 12 12"><path d="M3.6,0.8 Q1.2,1 1.2,3.2 V8.8 Q1.2,11 3.6,11.2" stroke="#16662a" stroke-width="2.2" fill="none"/><path d="M5,3.2 H11 M5,6 H11 M5,8.9 H11" stroke="#4c6a94" stroke-width="1.6"/></svg>
<div class="t" style="left:77px;top:195px;font-size:10.5px;color:#111">Pochutiny</div>
<div class="a" style="left:28px;top:216px;width:11px;height:1px;background:repeating-linear-gradient(90deg,#808080 0 1px,transparent 1px 2px)"></div>
<div class="a" style="left:42px;top:210px;width:13px;height:13px;border:2px solid #7f7f7f;background:#fff"></div>
<svg class="a" style="left:60px;top:210px" width="12" height="12" viewBox="0 0 12 12"><path d="M3.6,0.8 Q1.2,1 1.2,3.2 V8.8 Q1.2,11 3.6,11.2" stroke="#16662a" stroke-width="2.2" fill="none"/><path d="M5,3.2 H11 M5,6 H11 M5,8.9 H11" stroke="#4c6a94" stroke-width="1.6"/></svg>
<div class="t" style="left:77px;top:211px;font-size:10.5px;color:#111">Teplé nápoje</div>
<div class="a" style="left:28px;top:232px;width:11px;height:1px;background:repeating-linear-gradient(90deg,#808080 0 1px,transparent 1px 2px)"></div>
<div class="a" style="left:42px;top:226px;width:13px;height:13px;border:2px solid #7f7f7f;background:#fff"></div>
<svg class="a" style="left:60px;top:226px" width="12" height="12" viewBox="0 0 12 12"><path d="M3.6,0.8 Q1.2,1 1.2,3.2 V8.8 Q1.2,11 3.6,11.2" stroke="#16662a" stroke-width="2.2" fill="none"/><path d="M5,3.2 H11 M5,6 H11 M5,8.9 H11" stroke="#4c6a94" stroke-width="1.6"/></svg>
<div class="t" style="left:77px;top:227px;font-size:10.5px;color:#111">Víno</div>
<div class="a" style="left:8px;top:248px;width:11px;height:1px;background:repeating-linear-gradient(90deg,#808080 0 1px,transparent 1px 2px)"></div>
<div class="a" style="left:22px;top:242px;width:13px;height:13px;border:2px solid #7f7f7f;background:#fff"></div>
<svg class="a" style="left:40px;top:242px" width="12" height="12" viewBox="0 0 12 12"><path d="M3.6,0.8 Q1.2,1 1.2,3.2 V8.8 Q1.2,11 3.6,11.2" stroke="#16662a" stroke-width="2.2" fill="none"/><path d="M5,3.2 H11 M5,6 H11 M5,8.9 H11" stroke="#4c6a94" stroke-width="1.6"/></svg>
<div class="t" style="left:57px;top:243px;font-size:10.5px;color:#111">Systémové karty</div>
<div class="a" style="left:8px;top:264px;width:11px;height:1px;background:repeating-linear-gradient(90deg,#808080 0 1px,transparent 1px 2px)"></div>
<div class="a" style="left:22px;top:258px;width:13px;height:13px;border:2px solid #7f7f7f;background:#fff"></div>
<svg class="a" style="left:40px;top:258px" width="12" height="12" viewBox="0 0 12 12"><path d="M3.6,0.8 Q1.2,1 1.2,3.2 V8.8 Q1.2,11 3.6,11.2" stroke="#16662a" stroke-width="2.2" fill="none"/><path d="M5,3.2 H11 M5,6 H11 M5,8.9 H11" stroke="#4c6a94" stroke-width="1.6"/></svg>
<div class="t" style="left:57px;top:259px;font-size:10.5px;color:#111">Vína</div>
<div class="a" style="left:8px;top:280px;width:11px;height:1px;background:repeating-linear-gradient(90deg,#808080 0 1px,transparent 1px 2px)"></div>
<div class="a" style="left:4px;top:276px;width:9px;height:9px;border:1px solid #8a8a8a;background:#fff"></div>
<div class="a" style="left:6px;top:280px;width:5px;height:1px;background:#000"></div>
<div class="a" style="left:8px;top:278px;width:1px;height:5px;background:#000"></div>
<div class="a" style="left:22px;top:274px;width:13px;height:13px;border:2px solid #7f7f7f;background:#fff"></div>
<svg class="a" style="left:40px;top:274px" width="12" height="12" viewBox="0 0 12 12"><path d="M3.6,0.8 Q1.2,1 1.2,3.2 V8.8 Q1.2,11 3.6,11.2" stroke="#16662a" stroke-width="2.2" fill="none"/><path d="M5,3.2 H11 M5,6 H11 M5,8.9 H11" stroke="#4c6a94" stroke-width="1.6"/></svg>
<div class="t" style="left:57px;top:275px;font-size:10.5px;color:#111">Alkohol (4)</div>
<div class="a" style="left:8px;top:296px;width:11px;height:1px;background:repeating-linear-gradient(90deg,#808080 0 1px,transparent 1px 2px)"></div>
<div class="a" style="left:4px;top:292px;width:9px;height:9px;border:1px solid #8a8a8a;background:#fff"></div>
<div class="a" style="left:6px;top:296px;width:5px;height:1px;background:#000"></div>
<div class="a" style="left:8px;top:294px;width:1px;height:5px;background:#000"></div>
<div class="a" style="left:22px;top:290px;width:13px;height:13px;border:2px solid #7f7f7f;background:#fff"></div>
<svg class="a" style="left:40px;top:290px" width="12" height="12" viewBox="0 0 12 12"><path d="M3.6,0.8 Q1.2,1 1.2,3.2 V8.8 Q1.2,11 3.6,11.2" stroke="#16662a" stroke-width="2.2" fill="none"/><path d="M5,3.2 H11 M5,6 H11 M5,8.9 H11" stroke="#4c6a94" stroke-width="1.6"/></svg>
<div class="t" style="left:57px;top:291px;font-size:10.5px;color:#111">Čierna technika (10)</div>
<div class="a" style="left:8px;top:312px;width:11px;height:1px;background:repeating-linear-gradient(90deg,#808080 0 1px,transparent 1px 2px)"></div>
<div class="a" style="left:4px;top:308px;width:9px;height:9px;border:1px solid #8a8a8a;background:#fff"></div>
<div class="a" style="left:6px;top:312px;width:5px;height:1px;background:#000"></div>
<div class="a" style="left:8px;top:310px;width:1px;height:5px;background:#000"></div>
<div class="a" style="left:22px;top:306px;width:13px;height:13px;border:2px solid #7f7f7f;background:#fff"></div>
<svg class="a" style="left:40px;top:306px" width="12" height="12" viewBox="0 0 12 12"><path d="M3.6,0.8 Q1.2,1 1.2,3.2 V8.8 Q1.2,11 3.6,11.2" stroke="#16662a" stroke-width="2.2" fill="none"/><path d="M5,3.2 H11 M5,6 H11 M5,8.9 H11" stroke="#4c6a94" stroke-width="1.6"/></svg>
<div class="t" style="left:57px;top:307px;font-size:10.5px;color:#111">Mobilné telefóny (4)</div>
<div class="a" style="left:8px;top:328px;width:11px;height:1px;background:repeating-linear-gradient(90deg,#808080 0 1px,transparent 1px 2px)"></div>
<div class="a" style="left:4px;top:324px;width:9px;height:9px;border:1px solid #8a8a8a;background:#fff"></div>
<div class="a" style="left:6px;top:328px;width:5px;height:1px;background:#000"></div>
<div class="a" style="left:8px;top:326px;width:1px;height:5px;background:#000"></div>
<div class="a" style="left:22px;top:322px;width:13px;height:13px;border:2px solid #7f7f7f;background:#fff"></div>
<svg class="a" style="left:40px;top:322px" width="12" height="12" viewBox="0 0 12 12"><path d="M3.6,0.8 Q1.2,1 1.2,3.2 V8.8 Q1.2,11 3.6,11.2" stroke="#16662a" stroke-width="2.2" fill="none"/><path d="M5,3.2 H11 M5,6 H11 M5,8.9 H11" stroke="#4c6a94" stroke-width="1.6"/></svg>
<div class="t" style="left:57px;top:323px;font-size:10.5px;color:#111">PC Komponenty (39)</div>
<div class="a" style="left:8px;top:344px;width:11px;height:1px;background:repeating-linear-gradient(90deg,#808080 0 1px,transparent 1px 2px)"></div>
<div class="a" style="left:4px;top:340px;width:9px;height:9px;border:1px solid #8a8a8a;background:#fff"></div>
<div class="a" style="left:6px;top:344px;width:5px;height:1px;background:#000"></div>
<div class="a" style="left:8px;top:342px;width:1px;height:5px;background:#000"></div>
<div class="a" style="left:22px;top:338px;width:13px;height:13px;border:2px solid #7f7f7f;background:#fff"></div>
<svg class="a" style="left:40px;top:338px" width="12" height="12" viewBox="0 0 12 12"><path d="M3.6,0.8 Q1.2,1 1.2,3.2 V8.8 Q1.2,11 3.6,11.2" stroke="#16662a" stroke-width="2.2" fill="none"/><path d="M5,3.2 H11 M5,6 H11 M5,8.9 H11" stroke="#4c6a94" stroke-width="1.6"/></svg>
<div class="t" style="left:57px;top:339px;font-size:10.5px;color:#111">MP3 Prehrávače (3)</div>
<div class="a" style="left:8px;top:360px;width:11px;height:1px;background:repeating-linear-gradient(90deg,#808080 0 1px,transparent 1px 2px)"></div>
<div class="a" style="left:4px;top:356px;width:9px;height:9px;border:1px solid #8a8a8a;background:#fff"></div>
<div class="a" style="left:6px;top:360px;width:5px;height:1px;background:#000"></div>
<div class="a" style="left:8px;top:358px;width:1px;height:5px;background:#000"></div>
<div class="a" style="left:22px;top:354px;width:13px;height:13px;border:2px solid #7f7f7f;background:#fff"></div>
<svg class="a" style="left:40px;top:354px" width="12" height="12" viewBox="0 0 12 12"><path d="M3.6,0.8 Q1.2,1 1.2,3.2 V8.8 Q1.2,11 3.6,11.2" stroke="#16662a" stroke-width="2.2" fill="none"/><path d="M5,3.2 H11 M5,6 H11 M5,8.9 H11" stroke="#4c6a94" stroke-width="1.6"/></svg>
<div class="t" style="left:57px;top:355px;font-size:10.5px;color:#111">Monitory (1)</div>
<div class="a" style="left:8px;top:376px;width:11px;height:1px;background:repeating-linear-gradient(90deg,#808080 0 1px,transparent 1px 2px)"></div>
<div class="a" style="left:4px;top:372px;width:9px;height:9px;border:1px solid #8a8a8a;background:#fff"></div>
<div class="a" style="left:6px;top:376px;width:5px;height:1px;background:#000"></div>
<div class="a" style="left:8px;top:374px;width:1px;height:5px;background:#000"></div>
<div class="a" style="left:22px;top:370px;width:13px;height:13px;border:2px solid #7f7f7f;background:#fff"></div>
<svg class="a" style="left:40px;top:370px" width="12" height="12" viewBox="0 0 12 12"><path d="M3.6,0.8 Q1.2,1 1.2,3.2 V8.8 Q1.2,11 3.6,11.2" stroke="#16662a" stroke-width="2.2" fill="none"/><path d="M5,3.2 H11 M5,6 H11 M5,8.9 H11" stroke="#4c6a94" stroke-width="1.6"/></svg>
<div class="t" style="left:57px;top:371px;font-size:10.5px;color:#111">Biela technika (6)</div>
<div class="a" style="left:230px;top:0px;width:16px;height:379px;background:linear-gradient(90deg,#e8e8e8,#f2f2f2 40%,#ececec)"></div>
<svg class="a" style="left:234px;top:5px" width="8" height="6" viewBox="0 0 8 6"><path d="M0.5,5 L4,1.2 L7.5,5 Z" fill="#3c3c3c"/></svg>
<svg class="a" style="left:234px;top:366px" width="8" height="6" viewBox="0 0 8 6"><path d="M0.5,1 L4,4.8 L7.5,1 Z" fill="#3c3c3c"/></svg>
<div class="a" style="left:230px;top:18px;width:15px;height:262px;border:1px solid #8c8c8c;border-radius:2px;background:linear-gradient(90deg,#f6f6f6,#ececec 45%,#dcdcdc 70%,#c4c8cc)"></div>
<div class="a" style="left:234px;top:145px;width:7px;height:8px;background:repeating-linear-gradient(#383838 0 1.2px,transparent 1.2px 3px)"></div>
</div>
<div class="a" style="left:288px;top:185px;width:720px;height:388px;border:1px solid #d5d5d5;border-radius:3px;box-shadow:inset 1px 1px 0 #fff,1px 1px 0 #fff"></div>
<div class="a" style="left:296px;top:182px;width:50px;height:9px;background:#f0f0f0"></div>
<div class="t" style="left:298px;top:183px;font-size:10px;-webkit-text-stroke:.3px #5c2474;color:#5c2474">Vlastnosti</div>
<div class="a" style="left:292px;top:195px;width:713px;height:375px;background:#fff;border:1px solid #a8a8a8;overflow:hidden">
<div class="a" style="left:0px;top:0px;width:694px;height:16px;background:linear-gradient(#ffffff,#f4f4f4 50%,#ececec)"></div>
<div class="a" style="left:0px;top:16px;width:694px;height:1px;background:#000"></div>
<div class="a" style="left:147px;top:0px;width:1px;height:16px;background:#e2e2e2"></div>
<div class="a" style="left:388px;top:0px;width:1px;height:16px;background:#e2e2e2"></div>
<div class="a" style="left:429px;top:0px;width:1px;height:16px;background:#e2e2e2"></div>
<div class="a" style="left:449px;top:0px;width:1px;height:16px;background:#e2e2e2"></div>
<div class="t" style="left:64px;top:3px;font-size:10.5px;color:#111">Názov</div>
<div class="t" style="left:248px;top:3px;font-size:10.5px;color:#111">Hodnoty</div>
<div class="t" style="left:404px;top:3px;font-size:10.5px;color:#111;-webkit-text-stroke:.25px #111">MJ</div>
<div class="a" style="left:0px;top:0px;width:9px;height:356px;background:#f0f0f0"></div>
<div class="a" style="left:9px;top:0px;width:1px;height:356px;background:#000"></div>
<div class="a" style="left:0px;top:16px;width:10px;height:1px;background:#000"></div>
<div class="a" style="left:0px;top:33px;width:10px;height:1px;background:#000"></div>
<div class="a" style="left:0px;top:50px;width:10px;height:1px;background:#000"></div>
<div class="a" style="left:0px;top:67px;width:10px;height:1px;background:#000"></div>
<div class="a" style="left:0px;top:84px;width:10px;height:1px;background:#000"></div>
<div class="a" style="left:0px;top:101px;width:10px;height:1px;background:#000"></div>
<div class="a" style="left:0px;top:118px;width:10px;height:1px;background:#000"></div>
<div class="a" style="left:0px;top:135px;width:10px;height:1px;background:#000"></div>
<div class="a" style="left:0px;top:152px;width:10px;height:1px;background:#000"></div>
<div class="a" style="left:0px;top:169px;width:10px;height:1px;background:#000"></div>
<div class="a" style="left:0px;top:186px;width:10px;height:1px;background:#000"></div>
<div class="a" style="left:0px;top:203px;width:10px;height:1px;background:#000"></div>
<div class="a" style="left:0px;top:220px;width:10px;height:1px;background:#000"></div>
<div class="a" style="left:0px;top:237px;width:10px;height:1px;background:#000"></div>
<div class="a" style="left:0px;top:254px;width:10px;height:1px;background:#000"></div>
<div class="a" style="left:0px;top:271px;width:10px;height:1px;background:#000"></div>
<div class="a" style="left:0px;top:288px;width:10px;height:1px;background:#000"></div>
<div class="a" style="left:0px;top:305px;width:10px;height:1px;background:#000"></div>
<div class="a" style="left:0px;top:322px;width:10px;height:1px;background:#000"></div>
<div class="a" style="left:0px;top:339px;width:10px;height:1px;background:#000"></div>
<div class="a" style="left:0px;top:356px;width:10px;height:1px;background:#000"></div>
<div class="a" style="left:10px;top:17px;width:440px;height:16px;background:#c2dff2"></div>
<div class="a" style="left:388px;top:17px;width:1px;height:16px;background:#b4d2e8"></div>
<div class="a" style="left:429px;top:17px;width:1px;height:16px;background:#b4d2e8"></div>
<div class="a" style="left:10px;top:33px;width:684px;height:1px;background:#d4d4d4"></div>
<div class="t" style="left:12px;top:20px;font-size:10.5px;color:#0a1428">Pamäť</div>
<div class="a" style="left:10px;top:50px;width:684px;height:1px;background:#d8d8d8"></div>
<div class="a" style="left:147px;top:34px;width:1px;height:16px;background:#d8d8d8"></div>
<div class="a" style="left:388px;top:34px;width:1px;height:16px;background:#d8d8d8"></div>
<div class="a" style="left:429px;top:34px;width:1px;height:16px;background:#d8d8d8"></div>
<div class="a" style="left:449px;top:34px;width:1px;height:16px;background:#d8d8d8"></div>
<div class="a" style="left:430px;top:34px;width:19px;height:16px;background:#ececec"></div>
<div class="t" style="left:22px;top:37px;font-size:10.5px;color:#111">Varianta</div>
<div class="t" style="left:434px;top:38px;font-size:10px;color:#333">...</div>
<div class="a" style="left:10px;top:50px;width:683px;height:18px;background:#a2bde6;border:1px solid #4a7cb8;border-left:none;border-radius:0 2px 2px 0"></div>
<div class="a" style="left:148px;top:51px;width:240px;height:16px;background:#fff;border-left:2px solid #000;border-right:1px solid #9cc6ec;box-shadow:inset 0 1px 0 #bfeaff,inset 0 -1px 0 #bfeaff"></div>
<div class="a" style="left:430px;top:51px;width:19px;height:16px;background:#ececec"></div>
<div class="t" style="left:22px;top:54px;font-size:10.5px;color:#f2f6ff">Zariadenia tlač, POS</div>
<div class="t" style="left:391px;top:54px;font-size:10.5px;color:#f2f6ff">čislo</div>
<div class="t" style="left:434px;top:55px;font-size:10px;color:#333">...</div>
<div class="a" style="left:147px;top:51px;width:1px;height:16px;background:#c8dcf0"></div>
<div class="a" style="left:10px;top:68px;width:440px;height:16px;background:#c2dff2"></div>
<div class="a" style="left:388px;top:68px;width:1px;height:16px;background:#b4d2e8"></div>
<div class="a" style="left:429px;top:68px;width:1px;height:16px;background:#b4d2e8"></div>
<div class="a" style="left:10px;top:84px;width:684px;height:1px;background:#d4d4d4"></div>
<div class="t" style="left:12px;top:71px;font-size:10.5px;color:#0a1428">Dizajn</div>
<div class="a" style="left:10px;top:101px;width:684px;height:1px;background:#d8d8d8"></div>
<div class="a" style="left:147px;top:85px;width:1px;height:16px;background:#d8d8d8"></div>
<div class="a" style="left:388px;top:85px;width:1px;height:16px;background:#d8d8d8"></div>
<div class="a" style="left:429px;top:85px;width:1px;height:16px;background:#d8d8d8"></div>
<div class="a" style="left:449px;top:85px;width:1px;height:16px;background:#d8d8d8"></div>
<div class="a" style="left:430px;top:85px;width:19px;height:16px;background:#ececec"></div>
<div class="t" style="left:22px;top:88px;font-size:10.5px;color:#111">Farba</div>
<div class="t" style="left:434px;top:89px;font-size:10px;color:#333">...</div>
<div class="a" style="left:10px;top:118px;width:684px;height:1px;background:#d8d8d8"></div>
<div class="a" style="left:147px;top:102px;width:1px;height:16px;background:#d8d8d8"></div>
<div class="a" style="left:388px;top:102px;width:1px;height:16px;background:#d8d8d8"></div>
<div class="a" style="left:429px;top:102px;width:1px;height:16px;background:#d8d8d8"></div>
<div class="a" style="left:449px;top:102px;width:1px;height:16px;background:#d8d8d8"></div>
<div class="a" style="left:10px;top:135px;width:684px;height:1px;background:#d8d8d8"></div>
<div class="a" style="left:147px;top:119px;width:1px;height:16px;background:#d8d8d8"></div>
<div class="a" style="left:388px;top:119px;width:1px;height:16px;background:#d8d8d8"></div>
<div class="a" style="left:429px;top:119px;width:1px;height:16px;background:#d8d8d8"></div>
<div class="a" style="left:449px;top:119px;width:1px;height:16px;background:#d8d8d8"></div>
<div class="a" style="left:10px;top:152px;width:684px;height:1px;background:#d8d8d8"></div>
<div class="a" style="left:147px;top:136px;width:1px;height:16px;background:#d8d8d8"></div>
<div class="a" style="left:388px;top:136px;width:1px;height:16px;background:#d8d8d8"></div>
<div class="a" style="left:429px;top:136px;width:1px;height:16px;background:#d8d8d8"></div>
<div class="a" style="left:449px;top:136px;width:1px;height:16px;background:#d8d8d8"></div>
<div class="a" style="left:10px;top:169px;width:684px;height:1px;background:#d8d8d8"></div>
<div class="a" style="left:147px;top:153px;width:1px;height:16px;background:#d8d8d8"></div>
<div class="a" style="left:388px;top:153px;width:1px;height:16px;background:#d8d8d8"></div>
<div class="a" style="left:429px;top:153px;width:1px;height:16px;background:#d8d8d8"></div>
<div class="a" style="left:449px;top:153px;width:1px;height:16px;background:#d8d8d8"></div>
<div class="a" style="left:10px;top:186px;width:684px;height:1px;background:#d8d8d8"></div>
<div class="a" style="left:147px;top:170px;width:1px;height:16px;background:#d8d8d8"></div>
<div class="a" style="left:388px;top:170px;width:1px;height:16px;background:#d8d8d8"></div>
<div class="a" style="left:429px;top:170px;width:1px;height:16px;background:#d8d8d8"></div>
<div class="a" style="left:449px;top:170px;width:1px;height:16px;background:#d8d8d8"></div>
<div class="a" style="left:10px;top:203px;width:684px;height:1px;background:#d8d8d8"></div>
<div class="a" style="left:147px;top:187px;width:1px;height:16px;background:#d8d8d8"></div>
<div class="a" style="left:388px;top:187px;width:1px;height:16px;background:#d8d8d8"></div>
<div class="a" style="left:429px;top:187px;width:1px;height:16px;background:#d8d8d8"></div>
<div class="a" style="left:449px;top:187px;width:1px;height:16px;background:#d8d8d8"></div>
<div class="a" style="left:10px;top:220px;width:684px;height:1px;background:#d8d8d8"></div>
<div class="a" style="left:147px;top:204px;width:1px;height:16px;background:#d8d8d8"></div>
<div class="a" style="left:388px;top:204px;width:1px;height:16px;background:#d8d8d8"></div>
<div class="a" style="left:429px;top:204px;width:1px;height:16px;background:#d8d8d8"></div>
<div class="a" style="left:449px;top:204px;width:1px;height:16px;background:#d8d8d8"></div>
<div class="a" style="left:10px;top:237px;width:684px;height:1px;background:#d8d8d8"></div>
<div class="a" style="left:147px;top:221px;width:1px;height:16px;background:#d8d8d8"></div>
<div class="a" style="left:388px;top:221px;width:1px;height:16px;background:#d8d8d8"></div>
<div class="a" style="left:429px;top:221px;width:1px;height:16px;background:#d8d8d8"></div>
<div class="a" style="left:449px;top:221px;width:1px;height:16px;background:#d8d8d8"></div>
<div class="a" style="left:10px;top:254px;width:684px;height:1px;background:#d8d8d8"></div>
<div class="a" style="left:147px;top:238px;width:1px;height:16px;background:#d8d8d8"></div>
<div class="a" style="left:388px;top:238px;width:1px;height:16px;background:#d8d8d8"></div>
<div class="a" style="left:429px;top:238px;width:1px;height:16px;background:#d8d8d8"></div>
<div class="a" style="left:449px;top:238px;width:1px;height:16px;background:#d8d8d8"></div>
<div class="a" style="left:10px;top:271px;width:684px;height:1px;background:#d8d8d8"></div>
<div class="a" style="left:147px;top:255px;width:1px;height:16px;background:#d8d8d8"></div>
<div class="a" style="left:388px;top:255px;width:1px;height:16px;background:#d8d8d8"></div>
<div class="a" style="left:429px;top:255px;width:1px;height:16px;background:#d8d8d8"></div>
<div class="a" style="left:449px;top:255px;width:1px;height:16px;background:#d8d8d8"></div>
<div class="a" style="left:10px;top:288px;width:684px;height:1px;background:#d8d8d8"></div>
<div class="a" style="left:147px;top:272px;width:1px;height:16px;background:#d8d8d8"></div>
<div class="a" style="left:388px;top:272px;width:1px;height:16px;background:#d8d8d8"></div>
<div class="a" style="left:429px;top:272px;width:1px;height:16px;background:#d8d8d8"></div>
<div class="a" style="left:449px;top:272px;width:1px;height:16px;background:#d8d8d8"></div>
<div class="a" style="left:10px;top:305px;width:684px;height:1px;background:#d8d8d8"></div>
<div class="a" style="left:147px;top:289px;width:1px;height:16px;background:#d8d8d8"></div>
<div class="a" style="left:388px;top:289px;width:1px;height:16px;background:#d8d8d8"></div>
<div class="a" style="left:429px;top:289px;width:1px;height:16px;background:#d8d8d8"></div>
<div class="a" style="left:449px;top:289px;width:1px;height:16px;background:#d8d8d8"></div>
<div class="a" style="left:10px;top:322px;width:684px;height:1px;background:#d8d8d8"></div>
<div class="a" style="left:147px;top:306px;width:1px;height:16px;background:#d8d8d8"></div>
<div class="a" style="left:388px;top:306px;width:1px;height:16px;background:#d8d8d8"></div>
<div class="a" style="left:429px;top:306px;width:1px;height:16px;background:#d8d8d8"></div>
<div class="a" style="left:449px;top:306px;width:1px;height:16px;background:#d8d8d8"></div>
<div class="a" style="left:10px;top:339px;width:684px;height:1px;background:#d8d8d8"></div>
<div class="a" style="left:147px;top:323px;width:1px;height:16px;background:#d8d8d8"></div>
<div class="a" style="left:388px;top:323px;width:1px;height:16px;background:#d8d8d8"></div>
<div class="a" style="left:429px;top:323px;width:1px;height:16px;background:#d8d8d8"></div>
<div class="a" style="left:449px;top:323px;width:1px;height:16px;background:#d8d8d8"></div>
<div class="a" style="left:10px;top:356px;width:684px;height:1px;background:#d8d8d8"></div>
<div class="a" style="left:147px;top:340px;width:1px;height:16px;background:#d8d8d8"></div>
<div class="a" style="left:388px;top:340px;width:1px;height:16px;background:#d8d8d8"></div>
<div class="a" style="left:429px;top:340px;width:1px;height:16px;background:#d8d8d8"></div>
<div class="a" style="left:449px;top:340px;width:1px;height:16px;background:#d8d8d8"></div>
<svg class="a" style="left:3px;top:56px" width="7" height="9" viewBox="0 0 7 9"><path d="M1,0.5 L6,4.5 L1,8.5 Z" fill="#000"/></svg>
<div class="a" style="left:694px;top:0px;width:16px;height:357px;background:linear-gradient(90deg,#e6e6e6,#f0f0f0 40%,#ebebeb)"></div>
<svg class="a" style="left:698px;top:6px" width="8" height="6" viewBox="0 0 8 6"><path d="M0.5,5 L4,1.2 L7.5,5 Z" fill="#3c3c3c"/></svg>
<svg class="a" style="left:698px;top:345px" width="8" height="6" viewBox="0 0 8 6"><path d="M0.5,1 L4,4.8 L7.5,1 Z" fill="#3c3c3c"/></svg>
<div class="a" style="left:0px;top:357px;width:694px;height:16px;background:linear-gradient(#e6e6e6,#f0f0f0 40%,#ebebeb)"></div>
<div class="a" style="left:0px;top:357px;width:4px;height:16px;background:#000"></div>
<svg class="a" style="left:10px;top:361px" width="6" height="8" viewBox="0 0 6 8"><path d="M5,0.5 L1.2,4 L5,7.5 Z" fill="#3c3c3c"/></svg>
<svg class="a" style="left:683px;top:361px" width="6" height="8" viewBox="0 0 6 8"><path d="M1,0.5 L4.8,4 L1,7.5 Z" fill="#3c3c3c"/></svg>
</div>
<div class="a" style="left:544px;top:583px;width:467px;height:35px;border:1px solid #d5d5d5;border-radius:3px;box-shadow:inset 1px 1px 0 #fff,1px 1px 0 #fff"></div>
<div class="a" style="left:551px;top:579px;width:34px;height:8px;background:#f0f0f0"></div>
<div class="t" style="left:553px;top:580px;font-size:9.5px;-webkit-text-stroke:.3px #5c2474;color:#5c2474">Úkony</div>
<div class="t" style="left:801px;top:598px;font-size:12px;letter-spacing:-0.15px;color:#111"><u>P</u>ohyby</div>
<div class="t" style="left:879px;top:598px;font-size:12px;letter-spacing:-0.15px;color:#111"><u>U</u>ložiť</div>
<div class="a" style="left:937px;top:594px;width:68px;height:19px;border:1px solid #707070;border-radius:3px;background:linear-gradient(#f4f4f4 0%,#ebebeb 48%,#dcdcdc 52%,#cfcfcf 100%);box-shadow:inset 0 0 0 1px #fcfcfc"></div>
<div class="t" style="left:950px;top:598px;font-size:12px;letter-spacing:-0.15px;color:#111"><u>Z</u>atvoriť</div>
<svg class="a" style="left:569px;top:318px" width="14" height="22" viewBox="0 0 14 22"><path d="M0.5,0.5 L0.5,16.5 L4.2,12.8 L7.6,19.8 L10,18.8 L6.8,11.9 L11.6,11.5 Z" fill="#fff" stroke="#000" stroke-width="1" stroke-linejoin="miter"/></svg>

</body></html>
